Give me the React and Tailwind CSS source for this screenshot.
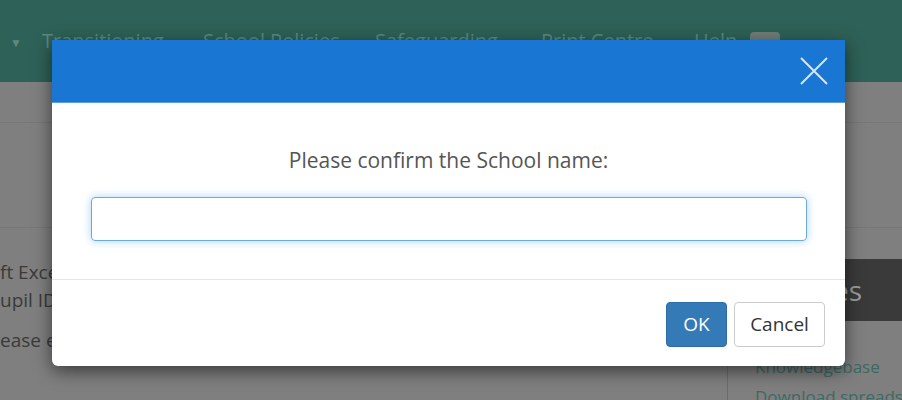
import React from "react";

export default function App() {
  return (
    <div className="relative w-[902px] h-[400px] overflow-hidden bg-[#7f7f7f] font-['Open_Sans',sans-serif]">
      {/* dimmed page underneath */}
      <div className="h-[82px] bg-[#2e6157] flex items-start pt-[27px] text-[20px] text-[#5b8a80] leading-[28px] whitespace-nowrap">
        <span className="ml-[10px] w-[32px] text-[12px] mt-[2px]">▼</span>
        <span className="w-[161px]">Transitioning</span>
        <span className="w-[172px]">School Policies</span>
        <span className="w-[166px]">Safeguarding</span>
        <span className="w-[153px]">Print Centre</span>
        <span className="w-[56px]">Help</span>
        <span className="mt-[5px] w-[30px] h-[18px] rounded-[4px] bg-[#6f7d78]"></span>
      </div>
      <div className="h-[41px] border-b border-[#777777]"></div>
      <div className="h-[105px] border-b border-[#777777]"></div>
      <div className="flex">
        <div className="w-[727px] shrink-0 pt-[30px] text-[19px] leading-[28px] text-[#3a3a3a] whitespace-nowrap overflow-hidden">
          <div>ft Excel spreadsheet</div>
          <div>upil ID numbers</div>
          <div className="mt-[12px]">ease ensure</div>
        </div>
        <div className="w-[175px] shrink-0 flex flex-col overflow-hidden">
          <div className="mt-[31px] h-[62px] bg-[#3a3a3a] text-[28px] leading-[62px] text-[#9c9c9c] text-right pr-[40px]">Resources</div>
          <div className="flex-1 border-l border-[#6c6c6c] pl-[27px] pt-[31px] text-[17px] leading-[30px] text-[#3c6964] whitespace-nowrap">
            <div>Knowledgebase</div>
            <div>Download spreadsheet</div>
          </div>
        </div>
      </div>

      {/* modal */}
      <div className="absolute left-[52px] top-[40px] w-[793px] h-[326px] bg-white rounded-b-[6px] shadow-[0_5px_18px_rgba(0,0,0,0.55)] flex flex-col">
        <div className="h-[63px] bg-[#1976d2] border-b border-[#5b9ee0] flex justify-end items-center pr-[16px]">
          <svg width="30" height="30" viewBox="0 0 30 30">
            <path d="M2 2 L28 28 M28 2 L2 28" stroke="#d6e6f8" strokeWidth="2" fill="none" />
          </svg>
        </div>
        <div className="h-[177px] flex flex-col items-center pt-[43px] border-b border-[#e5e5e5]">
          <div className="text-[21px] leading-[28px] text-[#555555]">Please confirm the School name:</div>
          <div className="mt-[23px] w-[716px] h-[44px] rounded-[4px] border border-[#6ea9dd] shadow-[0_0_8px_rgba(102,175,233,0.55)]"></div>
        </div>
        <div className="flex justify-end gap-[7px] pt-[22px] pr-[20px]">
          <button className="w-[61px] h-[45px] rounded-[4px] bg-[#337ab7] border border-[#2e6da4] text-white text-[19px]">OK</button>
          <button className="w-[91px] h-[45px] rounded-[4px] bg-white border border-[#cccccc] text-[#333333] text-[19px]">Cancel</button>
        </div>
      </div>
    </div>
  );
}
